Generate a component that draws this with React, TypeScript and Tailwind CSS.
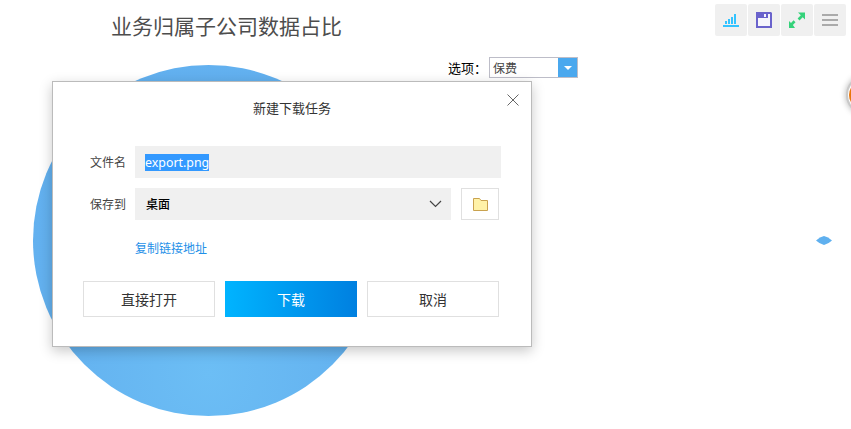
import React from "react";

const cjk = "font-['Noto_Sans_CJK_SC','Liberation_Sans',sans-serif]";

function ToolButton({ children }: { children: React.ReactNode }) {
  return (
    <div className="w-8 h-8 rounded-[2px] bg-[#f0f0f0] flex items-center justify-center">{children}</div>
  );
}

export default function App() {
  return (
    <div className={`relative w-[851px] h-[429px] overflow-hidden bg-white ${cjk}`}>
      {/* chart canvas */}
      <div className="absolute left-[33px] top-[65px] w-[351px] h-[351px] rounded-full bg-[radial-gradient(circle_at_50%_88%,#6cbef5_0%,#63b1ef_45%,#62b0ef_100%)]" />
      <svg className="absolute left-[816px] top-[236px]" width="16" height="9" viewBox="0 0 16 9">
        <path d="M0 4.500Q4 .8 8 0q4 .8 8 4.500-4 3.700-8 4.500-4-.8-8-4.500z" fill="#5fb0ef" />
      </svg>
      <div className="absolute left-[846px] top-[75px] w-[40px] h-[40px] rounded-full bg-white border-2 border-[#c9c9c9] shadow-[0_0_6px_rgba(0,0,0,0.3)] flex items-center pl-[1px]">
        <div className="w-7 h-7 rounded-full bg-[#e8760c]" />
      </div>

      {/* title row */}
      <div className="pl-[111px] pt-[9px] h-[44px] text-[21px] leading-[32px] text-[#4d4d4d]">业务归属子公司数据占比</div>

      {/* toolbox */}
      <div className="absolute left-[715px] top-1 flex gap-[1px]">
        <ToolButton>
          <svg width="16" height="13" viewBox="0 0 16 13">
            <path d="M0 11h16v2H0zM2 7h2v3H2zM5 5h2v5H5zM8 3h2v7H8zM11 0h2v10h-2z" fill="#33c3ff" />
          </svg>
        </ToolButton>
        <ToolButton>
          <svg width="16" height="16" viewBox="0 0 16 16">
            <path d="M0 0h15l1 1v15H0z" fill="#6a63cc" />
            <path d="M2 6h12v8H2zM12 2h2v4h-2zM8 2h2v3H8z" fill="#f6f6fc" />
          </svg>
        </ToolButton>
        <ToolButton>
          <svg width="16" height="16" viewBox="0 0 16 16">
            <path d="M9 .5h7v7l-2.300-2.300-3.200 3.200-1.900-1.900 3.200-3.200z" fill="#34d27a" />
            <path d="M0 9l2 2 2.600-2.700 1.900 1.900L3.900 13 6 16H0z" fill="#34d27a" />
          </svg>
        </ToolButton>
        <ToolButton>
          <div className="flex flex-col gap-[3px]">
            <div className="w-4 h-[2px] bg-[#aaa]" />
            <div className="w-4 h-[2px] bg-[#aaa]" />
            <div className="w-4 h-[2px] bg-[#aaa]" />
          </div>
        </ToolButton>
      </div>

      {/* select row */}
      <div className="flex items-center justify-end pr-[273px] h-[21px] mt-[13px]">
        <span className="text-[13px] leading-[18px] text-black mr-[2px] w-[39px]">选项：</span>
        <div className="flex w-[89px] h-[21px] border border-[#bdbdc8]">
          <span className="flex-1 text-[12px] leading-[20px] pl-[3px] text-[#444]">保费</span>
          <div className="w-[19px] bg-[#4aa8ee] flex items-center justify-center">
            <div className="w-0 h-0 border-l-[4px] border-r-[4px] border-t-[4px] border-l-transparent border-r-transparent border-t-white" />
          </div>
        </div>
      </div>

      {/* dialog */}
      <div className="absolute left-[52px] top-[81px] w-[480px] h-[266px] bg-white border border-[#bbb] shadow-[0_4px_12px_rgba(0,0,0,0.22)] flex flex-col">
        <div className="relative h-[53px] flex items-center justify-center text-[13px] text-[#333]">
          <span className="-mt-[1px]">新建下载任务</span>
          <svg className="absolute right-[12px] top-[12px]" width="12" height="12" viewBox="0 0 12 12">
            <path d="M.5.5l11 11M11.500.5l-11 11" stroke="#666" strokeWidth="1" fill="none" />
          </svg>
        </div>

        <div className="flex items-center mt-[11px] pl-[37px]">
          <span className="w-[45px] text-[12px] leading-[16px] -mt-[1px] text-[#444]">文件名</span>
          <div className="w-[366px] h-8 bg-[#f0f0f0] flex items-center pl-[10px]">
            <span className="bg-[#3399ff] text-white text-[12.400px] leading-[17px] font-['Noto_Sans','Liberation_Sans',sans-serif]">export.png</span>
          </div>
        </div>

        <div className="flex items-center mt-[10px] pl-[37px]">
          <span className="w-[45px] text-[12px] leading-[16px] -mt-[1px] text-[#444]">保存到</span>
          <div className="w-[316px] h-8 bg-[#f0f0f0] flex items-center justify-between pl-[11px] pr-[9px] text-[12px] font-medium text-black">
            <span className="-mt-[1px]">桌面</span>
            <svg width="13" height="8" viewBox="0 0 13 8">
              <path d="M1 1l5.500 5.500L12 1" stroke="#444" strokeWidth="1.2" fill="none" />
            </svg>
          </div>
          <div className="ml-[10px] w-[38px] h-8 border border-[#e0e0e0] flex items-center justify-center">
            <svg width="15" height="13" viewBox="0 0 15 13">
              <path d="M.5 12.500V.500h6l1.500 2h6.500v10z" fill="#fff2a8" stroke="#c9a24f" />
            </svg>
          </div>
        </div>

        <div className="mt-[19px] pl-[82px] h-[18px] text-[12px] leading-[18px] text-[#1e90e8]">复制链接地址</div>

        <div className="flex mt-[24px] pl-[30px] gap-[10px] text-[14px] leading-[20px]">
          <div className="w-[132px] h-9 border border-[#e0e0e0] flex items-center justify-center text-[#333]">直接打开</div>
          <div className="w-[132px] h-9 bg-gradient-to-r from-[#00b4ff] to-[#0080e0] flex items-center justify-center text-white">下载</div>
          <div className="w-[132px] h-9 border border-[#e0e0e0] flex items-center justify-center text-[#333]">取消</div>
        </div>
      </div>
    </div>
  );
}
